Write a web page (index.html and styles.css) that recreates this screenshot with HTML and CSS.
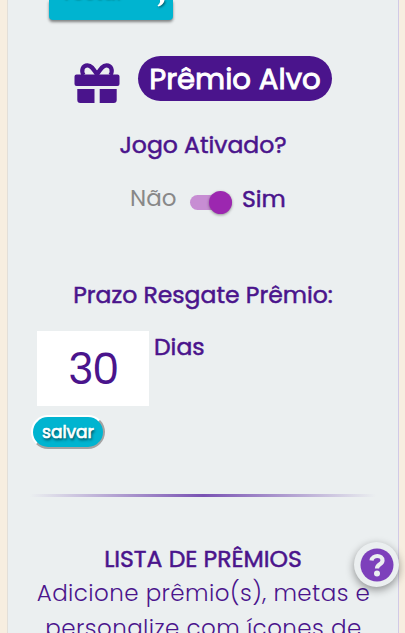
FILE: index.html
```html
<!DOCTYPE html>
<html lang="pt-BR">
<head>
<meta charset="utf-8">
<title>Prêmio Alvo</title>
<link rel="stylesheet" href="styles.css">
</head>
<body>
<main class="panel">
  <button class="action"><span class="action-label">Testar</span><span class="action-dot">-</span><svg class="action-icon" viewBox="0 0 9 7"><path d="M4 0H8.500C8 3 6 5.500 2.500 6.500L1.500 5.500C3.500 4 4.500 2 4 0Z"/></svg></button>
  <header class="heading">
    <svg class="gift" viewBox="0 0 46 41"><path class="ribbon" d="M23 11.500C19 5 17 2.300 13.500 2.300C8.500 2.300 7 7.500 9.500 12M23 11.500C27 5 29 2.300 32.500 2.300C37.500 2.300 39 7.500 36.500 12"/><path d="M2.500 11.500H43.500Q45.500 11.500 45.500 13.500V21Q45.500 23 43.500 23H2.500Q.5 23 .5 21V13.500Q.5 11.500 2.500 11.500ZM3.300 26H20.500V40H6.300Q3.300 40 3.300 37ZM25.700 26H42.700V37Q42.700 40 39.700 40H25.700Z"/></svg>
    <h1 class="title"><span>Prêmio Alvo</span></h1>
  </header>
  <h2 class="question"><span>Jogo Ativado?</span></h2>
  <div class="toggle"><span class="no">Não</span><span class="switch"><span class="thumb"></span></span><span class="yes">Sim</span></div>
  <h2 class="deadline"><span>Prazo Resgate Prêmio:</span></h2>
  <div class="days"><span class="number"><span>30</span></span><span class="unit">Dias</span></div>
  <button class="save"><span>salvar</span></button>
  <div class="divider"></div>
  <section class="prizes">
    <h3 class="prizes-title"><span>LISTA DE PRÊMIOS</span></h3>
    <p class="line"><span>Adicione prêmio(s), metas e</span></p>
    <p class="line"><span>personalize com ícones de</span></p>
  </section>
</main>
<div class="help"><svg viewBox="0 0 34 34"><circle cx="17" cy="17" r="16.500"/><path class="mark" d="M11.500 12.500C12.500 6.500 22.500 6.500 22.500 12.500C22.500 16.500 17 16 17 20.500"/><circle class="point" cx="17" cy="25.500" r="3"/></svg></div>
</body>
</html>
```
FILE: styles.css
```css
* { box-sizing: border-box; }
html, body { margin: 0; height: 633px; overflow: hidden; }
body { background: #f7eee0; color: #4a148c; font-family: Poppins, Inter, sans-serif; }
h1, h2, h3, p { margin: 0; font-weight: 400; white-space: nowrap; }
button { font-family: inherit; border: 0; padding: 0; }
.panel { margin-left: 7px; width: 392px; height: 633px; overflow: hidden; background: #ebeff0; border-left: 1px solid #e2dfd9; border-right: 1px solid #d1c9e7; display: flex; flex-direction: column; }
.action { flex: none; margin-left: 41px; width: 124px; height: 20px; background: #00b4d0; border-radius: 0 0 4px 4px; box-shadow: 0 2px 3px #0007; display: flex; align-items: flex-start; }
.action-label { margin: -19px 0 0 12px; width: 80px; color: #0c8b9e; font-size: 20px; line-height: 22px; text-align: left; font-weight: 500; text-shadow: 0 1px 2px #066; }
.action-dot { margin-top: -10px; width: 15px; color: #087c8e; }
.action-icon { width: 9px; height: 7px; fill: #fff; filter: drop-shadow(1px 1px 1px #0008); }
.heading { flex: none; margin-top: 36px; height: 46px; display: flex; padding-left: 66px; }
.gift { width: 46px; height: 41px; margin-top: 7px; fill: #4a148c; }
.ribbon { fill: none; stroke: #4a148c; stroke-width: 4.200; }
.title { margin-left: 18px; width: 194px; height: 45px; border-radius: 23px; background: #4a148c; color: #fff; text-align: center; line-height: 46px; font-size: 29.200px; -webkit-text-stroke: .9px #fff; }
.question, .deadline, .yes, .unit, .prizes-title { -webkit-text-stroke: .5px #4a148c; }
.question, .deadline { flex: none; text-align: center; font-size: 23.500px; line-height: 32px; }
.question { margin-top: 27px; }
.toggle { flex: none; height: 36px; margin-top: 20px; padding-left: 122px; display: flex; font-size: 23px; line-height: 35px; }
.no { width: 60px; color: #888; }
.switch { width: 42px; height: 15px; margin-top: 14px; border-radius: 8px; background: #c78dd3; display: flex; justify-content: flex-end; align-items: center; }
.thumb { width: 23px; height: 23px; flex: none; border-radius: 50%; background: #9c27b0; box-shadow: 0 1px 3px #0006; }
.yes { margin-left: 10px; font-size: 23.500px; }
.deadline { margin-top: 62px; }
.days { flex: none; margin: 20px 0 0 29px; height: 75px; display: flex; }
.number { width: 112px; background: #fff; font-size: 43px; line-height: 76px; text-align: center; letter-spacing: -1.500px; }
.unit { margin-left: 5px; font-size: 23.500px; line-height: 31px; }
.save { flex: none; margin: 9px 0 0 23px; width: 74px; height: 34px; border-radius: 17px; border: 2px solid; border-color: #fff #a3a3a3 #a3a3a3 #fff; background: #00b4d0; color: #fff; font-size: 17px; font-weight: 400; -webkit-text-stroke: .7px #fff; line-height: 29px; text-shadow: 1px 2px 3px #000b; }
.divider { flex: none; height: 3px; margin: 45px 22px 0; background: linear-gradient(90deg, transparent, #7952b3, transparent); }
.prizes { margin-top: 45px; text-align: center; }
.prizes-title { font-size: 23.500px; line-height: 34px; }
.line { padding-left: 1px; font-size: 23px; line-height: 35px; font-weight: 300; letter-spacing: .43px; }
.help { position: absolute; left: 354px; top: 542px; width: 45px; height: 45px; border-radius: 50%; background: #ebeff0; box-shadow: 0 3px 8px #0006; display: flex; align-items: center; justify-content: center; }
.help svg { width: 34px; height: 34px; fill: #7d40bb; }
.help .mark { fill: none; stroke: #ebeff0; stroke-width: 4.200; }
.help .point { fill: #ebeff0; }
```
